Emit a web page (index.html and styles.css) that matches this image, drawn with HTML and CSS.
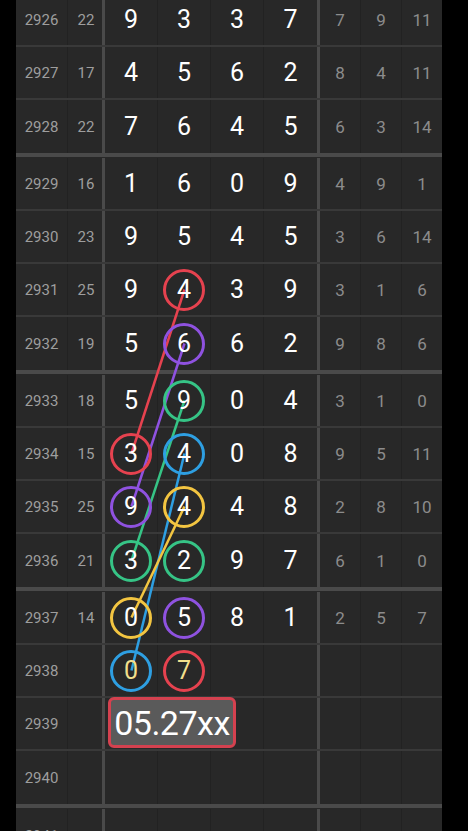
FILE: index.html
```html
<!DOCTYPE html>
<html>
<head>
<meta charset="utf-8">
<link rel="stylesheet" href="styles.css">
</head>
<body>
<div class="board">
  <div class="group first">
    <div class="row"><div class="c p">2926</div><div class="c s">22</div><div class="c d">9</div><div class="c d">3</div><div class="c d">3</div><div class="c d e">7</div><div class="c r">7</div><div class="c r">9</div><div class="c r z">11</div></div>
    <div class="row"><div class="c p">2927</div><div class="c s">17</div><div class="c d">4</div><div class="c d">5</div><div class="c d">6</div><div class="c d e">2</div><div class="c r">8</div><div class="c r">4</div><div class="c r z">11</div></div>
    <div class="row"><div class="c p">2928</div><div class="c s">22</div><div class="c d">7</div><div class="c d">6</div><div class="c d">4</div><div class="c d e">5</div><div class="c r">6</div><div class="c r">3</div><div class="c r z">14</div></div>
  </div>
  <div class="group">
    <div class="row"><div class="c p">2929</div><div class="c s">16</div><div class="c d">1</div><div class="c d">6</div><div class="c d">0</div><div class="c d e">9</div><div class="c r">4</div><div class="c r">9</div><div class="c r z">1</div></div>
    <div class="row"><div class="c p">2930</div><div class="c s">23</div><div class="c d">9</div><div class="c d">5</div><div class="c d">4</div><div class="c d e">5</div><div class="c r">3</div><div class="c r">6</div><div class="c r z">14</div></div>
    <div class="row"><div class="c p">2931</div><div class="c s">25</div><div class="c d">9</div><div class="c d"><span class="ring red">4</span></div><div class="c d">3</div><div class="c d e">9</div><div class="c r">3</div><div class="c r">1</div><div class="c r z">6</div></div>
    <div class="row"><div class="c p">2932</div><div class="c s">19</div><div class="c d">5</div><div class="c d"><span class="ring purple">6</span></div><div class="c d">6</div><div class="c d e">2</div><div class="c r">9</div><div class="c r">8</div><div class="c r z">6</div></div>
  </div>
  <div class="group">
    <div class="row"><div class="c p">2933</div><div class="c s">18</div><div class="c d">5</div><div class="c d"><span class="ring green">9</span></div><div class="c d">0</div><div class="c d e">4</div><div class="c r">3</div><div class="c r">1</div><div class="c r z">0</div></div>
    <div class="row"><div class="c p">2934</div><div class="c s">15</div><div class="c d"><span class="ring red">3</span></div><div class="c d"><span class="ring blue">4</span></div><div class="c d">0</div><div class="c d e">8</div><div class="c r">9</div><div class="c r">5</div><div class="c r z">11</div></div>
    <div class="row"><div class="c p">2935</div><div class="c s">25</div><div class="c d"><span class="ring purple">9</span></div><div class="c d"><span class="ring yellow">4</span></div><div class="c d">4</div><div class="c d e">8</div><div class="c r">2</div><div class="c r">8</div><div class="c r z">10</div></div>
    <div class="row"><div class="c p">2936</div><div class="c s">21</div><div class="c d"><span class="ring green">3</span></div><div class="c d"><span class="ring green">2</span></div><div class="c d">9</div><div class="c d e">7</div><div class="c r">6</div><div class="c r">1</div><div class="c r z">0</div></div>
  </div>
  <div class="group">
    <div class="row"><div class="c p">2937</div><div class="c s">14</div><div class="c d"><span class="ring yellow">0</span></div><div class="c d"><span class="ring purple">5</span></div><div class="c d">8</div><div class="c d e">1</div><div class="c r">2</div><div class="c r">5</div><div class="c r z">7</div></div>
    <div class="row"><div class="c p">2938</div><div class="c s"></div><div class="c d"><span class="ring blue pale">0</span></div><div class="c d"><span class="ring red pale">7</span></div><div class="c d"></div><div class="c d e"></div><div class="c r"></div><div class="c r"></div><div class="c r z"></div></div>
    <div class="row"><div class="c p">2939</div><div class="c s"></div><div class="c d"><span class="tag">05.27xx</span></div><div class="c d"></div><div class="c d"></div><div class="c d e"></div><div class="c r"></div><div class="c r"></div><div class="c r z"></div></div>
    <div class="row"><div class="c p">2940</div><div class="c s"></div><div class="c d"></div><div class="c d"></div><div class="c d"></div><div class="c d e"></div><div class="c r"></div><div class="c r"></div><div class="c r z"></div></div>
  </div>
  <div class="group">
    <div class="row"><div class="c p">2941</div><div class="c s"></div><div class="c d"></div><div class="c d"></div><div class="c d"></div><div class="c d e"></div><div class="c r"></div><div class="c r"></div><div class="c r z"></div></div>
  </div>
</div>
<svg class="links" width="468" height="831" viewBox="0 0 468 831">
  <line x1="184.5" y1="289.5" x2="131.5" y2="453.5" stroke="#e6424f" stroke-width="2.5"/>
  <line x1="184.5" y1="343.5" x2="131.5" y2="506.5" stroke="#8f52e0" stroke-width="2.5"/>
  <line x1="184.5" y1="400.5" x2="131.5" y2="560.5" stroke="#36c486" stroke-width="2.5"/>
  <line x1="184.5" y1="453.5" x2="131.5" y2="670.5" stroke="#2e9fe2" stroke-width="2.5"/>
  <line x1="184.5" y1="506.5" x2="131.5" y2="617.5" stroke="#f3c541" stroke-width="2.5"/>
</svg>
</body>
</html>
```
FILE: styles.css
```css
html, body {
  margin: 0;
  padding: 0;
  background: #000;
}
body {
  position: relative;
  width: 468px;
  height: 831px;
  overflow: hidden;
  font-family: Roboto, "DejaVu Sans", sans-serif;
}
.board {
  margin-left: 16px;
  width: 426px;
  margin-top: -6px;
}
.group {
  background: #282828;
  border-bottom: 4px solid #4a4a4a;
  padding-top: 1px;
}
.group.first {
  padding-top: 0;
}
.row {
  display: grid;
  grid-template-columns: 52px 37px 53px 53px 53px 56px 41px 41px 40px;
  height: 53px;
  box-sizing: border-box;
  border-bottom: 2px solid #393939;
}
.row:last-child {
  border-bottom: none;
}
.c {
  display: flex;
  align-items: center;
  justify-content: center;
  box-sizing: border-box;
  border-right: 1px solid #222;
  position: relative;
}
.p, .s {
  color: #9e9e9e;
  font-size: 15px;
}
.s {
  border-right: 3px solid #4a4a4a;
  padding-left: 2px;
}
.d {
  color: #fff;
  font-size: 25px;
}
.d.e {
  border-right: 3px solid #4a4a4a;
}
.r {
  color: #8c8c8c;
  font-size: 17px;
}
.r.z {
  border-right: none;
}
.ring {
  position: relative;
  z-index: 2;
  width: 42px;
  height: 42px;
  box-sizing: border-box;
  border: 3px solid;
  border-radius: 50%;
  display: flex;
  align-items: center;
  justify-content: center;
  color: #fff;
}
.ring.pale {
  color: #f1df8c;
}
.red { border-color: #e6424f; }
.purple { border-color: #8f52e0; }
.green { border-color: #36c486; }
.blue { border-color: #2e9fe2; }
.yellow { border-color: #f3c541; }
.tag {
  position: absolute;
  z-index: 3;
  left: 3px;
  top: -1px;
  width: 128px;
  height: 51px;
  box-sizing: border-box;
  border: 3px solid #d4414f;
  border-radius: 6px;
  background: #5a5a5a;
  color: #fff;
  font-size: 34px;
  letter-spacing: -0.5px;
  display: flex;
  align-items: center;
  justify-content: center;
  white-space: nowrap;
}
.links {
  position: absolute;
  left: 0;
  top: 0;
  z-index: 1;
  pointer-events: none;
}
```
